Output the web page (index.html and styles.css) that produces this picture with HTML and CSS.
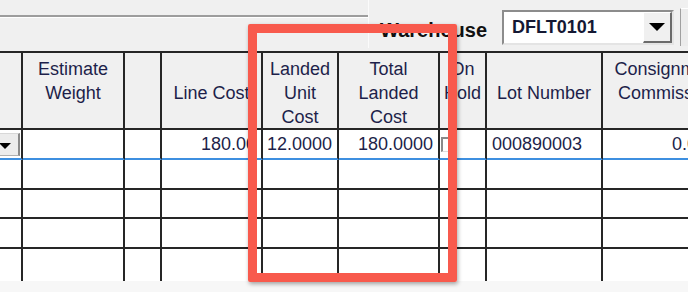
FILE: index.html
```html
<!DOCTYPE html>
<html lang="en">
<head>
    <meta charset="UTF-8">
    <title>Receipt Lines</title>
    <link rel="stylesheet" href="styles.css">
</head>
<body>
    <div class="toolbar">
        <div class="panel"><div class="panel-strip"></div></div>
        <span class="wh-label">Warehouse</span>
        <div class="combo">
            <span class="combo-value">DFLT0101</span>
            <span class="combo-btn"><span class="arrow"></span></span>
        </div>
        <div class="edge-btn"></div>
    </div>

    <div class="grid">
        <!-- header row -->
        <div class="cell hd"></div>
        <div class="cell hd">Estimate<br>Weight</div>
        <div class="cell hd"></div>
        <div class="cell hd one">Line Cost</div>
        <div class="cell hd">Landed<br>Unit<br>Cost</div>
        <div class="cell hd">Total<br>Landed<br>Cost</div>
        <div class="cell hd">On<br>Hold</div>
        <div class="cell hd one">Lot Number</div>
        <div class="cell hd">Consignment<br>Commission</div>

        <!-- current row -->
        <div class="cell cur"><span class="row-btn"><span class="arrow small"></span></span></div>
        <div class="cell cur"></div>
        <div class="cell cur"></div>
        <div class="cell cur num">180.00</div>
        <div class="cell cur num">12.0000</div>
        <div class="cell cur num">180.0000</div>
        <div class="cell cur"><span class="check"></span></div>
        <div class="cell cur txt">000890003</div>
        <div class="cell cur num">0.0000</div>

        <!-- empty rows -->
        <div class="cell"></div><div class="cell"></div><div class="cell"></div><div class="cell"></div><div class="cell"></div><div class="cell"></div><div class="cell"></div><div class="cell"></div><div class="cell"></div>
        <div class="cell"></div><div class="cell"></div><div class="cell"></div><div class="cell"></div><div class="cell"></div><div class="cell"></div><div class="cell"></div><div class="cell"></div><div class="cell"></div>
        <div class="cell"></div><div class="cell"></div><div class="cell"></div><div class="cell"></div><div class="cell"></div><div class="cell"></div><div class="cell"></div><div class="cell"></div><div class="cell"></div>
        <div class="cell last"></div><div class="cell last"></div><div class="cell last"></div><div class="cell last"></div><div class="cell last"></div><div class="cell last"></div><div class="cell last"></div><div class="cell last"></div><div class="cell last"></div>
    </div>
    <div class="bottom"></div>

    <div class="highlight"></div>
</body>
</html>
```

FILE: styles.css
```css
* {
    box-sizing: border-box;
    margin: 0;
    padding: 0;
}

body {
    font-family: 'Liberation Sans', Arial, sans-serif;
    background: #f0f0f0;
    width: 688px;
    height: 292px;
    overflow: hidden;
    color: #1d1f4a;
}

/* top bar */
.toolbar {
    display: flex;
    align-items: flex-start;
    height: 51px;
}

.toolbar > * {
    flex-shrink: 0;
}

.panel {
    width: 369px;
    height: 48px;
    border-right: 1px solid #fbfbfb;
}

.panel-strip {
    height: 17px;
    border-bottom: 2px solid #9d9d9d;
    box-shadow: 0 1px 0 #fff;
}

.wh-label {
    margin: 19px 0 0 11px;
    font-size: 20px;
    font-weight: bold;
    color: #111;
    line-height: 22px;
}

.combo {
    display: flex;
    align-items: center;
    margin: 10px 0 0 15px;
    width: 172px;
    height: 35px;
    background: #fff;
    border-top: 2px solid #8c8c8c;
    border-left: 2px solid #8c8c8c;
    border-right: 2px solid #e4e4e4;
    border-bottom: 2px solid #e4e4e4;
    padding-left: 8px;
}

.combo-value {
    flex: 1;
    font-size: 18px;
    font-weight: bold;
    color: #141833;
}

.combo-btn {
    display: flex;
    align-items: center;
    justify-content: center;
    width: 29px;
    height: 31px;
    background: #f0f0f0;
    border-top: 1px solid #fff;
    border-left: 1px solid #fff;
    border-right: 2px solid #6b6b6b;
    border-bottom: 2px solid #6b6b6b;
}

.arrow {
    width: 0;
    height: 0;
    border-left: 8px solid transparent;
    border-right: 8px solid transparent;
    border-top: 8px solid #000;
}

.arrow.small {
    border-left-width: 6px;
    border-right-width: 6px;
    border-top-width: 6px;
}

.edge-btn {
    margin: 8px 0 0 6px;
    width: 20px;
    height: 38px;
    border-left: 1px solid #a0a0a0;
    border-top: 1px solid #fff;
    background: #ececec;
}

/* grid */
.grid {
    display: grid;
    grid-template-columns: 23px 102px 37px 101px 76px 101px 47px 116px 131px;
    grid-template-rows: 77px 30px 30px 29px 30px 32px;
    height: 230px;
    overflow: hidden;
    border-top: 2px solid #262626;
    background: #fff;
}

.cell {
    border-right: 2px solid #262626;
    border-bottom: 2px solid #262626;
    background: #fff;
    font-size: 18px;
    line-height: 28px;
    white-space: nowrap;
    overflow: hidden;
}

.cell.last {
    border-bottom: none;
}

.hd {
    background: #f0f0f0;
    text-align: center;
    line-height: 24px;
    padding-top: 4px;
}

.hd.one {
    padding-top: 28px;
}

.cur {
    border-bottom: 2px solid #3d8fe0;
}

.num {
    text-align: right;
    padding-right: 5px;
}

.txt {
    padding-left: 5px;
}

.row-btn {
    display: flex;
    align-items: center;
    justify-content: center;
    margin: 3px 0 0 -9px;
    width: 29px;
    height: 23px;
    background: #ececec;
    border-top: 1px solid #d8d8d8;
    border-right: 2px solid #8a8a8a;
    border-bottom: 1px solid #b0b0b0;
    padding-top: 3px;
}

.check {
    display: block;
    margin: 7px 0 0 1px;
    width: 14px;
    height: 15px;
    border-top: 2px solid #8a8a8a;
    border-left: 2px solid #8a8a8a;
    border-right: 1px solid #dcdcdc;
    border-bottom: 1px solid #dcdcdc;
    background: #fff;
}

.bottom {
    height: 11px;
    background: #f7f7f7;
}

/* callout box drawn over the screenshot */
.highlight {
    position: absolute;
    left: 248px;
    top: 24px;
    width: 209px;
    height: 258px;
    border: 9px solid #f85a4d;
    border-radius: 2px;
    box-shadow: 1px 2px 4px rgba(0, 0, 0, 0.35);
}
```
